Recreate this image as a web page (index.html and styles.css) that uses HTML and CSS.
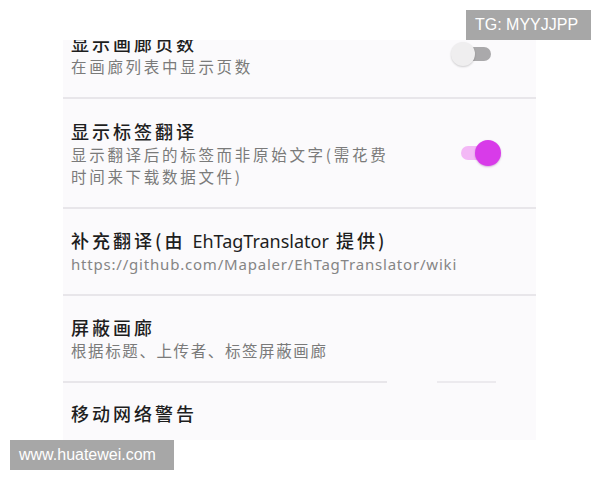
FILE: index.html
```html
<!DOCTYPE html>
<html lang="zh-CN">
<head>
<meta charset="UTF-8" />
<meta name="viewport" content="width=device-width, initial-scale=1" />
<title>设置</title>
<link rel="stylesheet" href="styles.css">
</head>
<body>

<div class="panel">
  <ul class="prefs">
    <li class="pref pref-first">
      <div class="pref-text">
        <div class="pref-title">显示画廊页数</div>
        <div class="pref-summary">在画廊列表中显示页数</div>
      </div>
      <span class="switch"><span class="track"></span><span class="thumb"></span></span>
    </li>
    <li class="pref">
      <div class="pref-text narrow">
        <div class="pref-title">显示标签翻译</div>
        <div class="pref-summary">显示翻译后的标签而非原始文字(需花费时间来下载数据文件)</div>
      </div>
      <span class="switch on"><span class="track"></span><span class="thumb"></span></span>
    </li>
    <li class="pref">
      <div class="pref-text">
        <div class="pref-title">补充翻译(由 <span class="latin">EhTagTranslator</span> 提供)</div>
        <div class="pref-summary url">https://github.com/Mapaler/EhTagTranslator/wiki</div>
      </div>
    </li>
    <li class="pref pref-split">
      <div class="pref-text">
        <div class="pref-title">屏蔽画廊</div>
        <div class="pref-summary tight">根据标题、上传者、标签屏蔽画廊</div>
      </div>
    </li>
    <li class="pref pref-last">
      <div class="pref-text">
        <div class="pref-title">移动网络警告</div>
      </div>
    </li>
  </ul>
</div>

<div class="mark mark-top">TG: MYYJJPP</div>
<div class="mark mark-bottom">www.huatewei.com</div>

</body>
</html>
```

FILE: styles.css
```css
body {
  margin: 0;
  background: #fff;
  font-family: "Noto Sans", "Noto Sans CJK SC", sans-serif;
  color: #1e1e1e;
}
.panel {
  margin: 40px 0 0 63px;
  width: 473px;
  height: 400px;
  overflow: hidden;
  background: #fbfafc;
}
.prefs {
  list-style: none;
  margin: -28px 0 0;
  padding: 0;
}
.pref {
  display: flex;
  align-items: center;
  padding: 18px 35px 19px 8px;
  border-bottom: 2px solid #e8e6ea;
  height: 48px;
}
.pref:nth-child(2) {
  height: 71px;
}
.pref-split {
  position: relative;
  border-bottom: none;
  padding-bottom: 21px;
}
.pref-split::after {
  content: "";
  position: absolute;
  left: 0;
  bottom: 0;
  width: 433px;
  height: 2px;
  background: linear-gradient(to right, #e8e6ea 324px, transparent 324px, transparent 374px, #eceaee 374px);
}
.pref-last {
  border-bottom: none;
  align-items: flex-start;
}
.pref-text {
  flex: 1;
}
.pref-text.narrow {
  flex: none;
  width: 330px;
  margin-right: auto;
}
.pref-title {
  font-family: "Noto Sans CJK SC", sans-serif;
  font-size: 18px;
  font-weight: 500;
  line-height: 24px;
  letter-spacing: 3px;
}
.latin {
  font-family: "Noto Sans", sans-serif;
  font-weight: 400;
  letter-spacing: 0;
}
.pref-summary {
  font-family: "Noto Sans CJK SC", sans-serif;
  font-size: 15.5px;
  line-height: 22px;
  letter-spacing: 2.7px;
  color: #7a7a7a;
}
.pref-summary.tight {
  letter-spacing: 1.6px;
}
.pref-summary.url {
  font-family: "Noto Sans", sans-serif;
  font-size: 15px;
  letter-spacing: 0.8px;
  color: #858585;
}
.switch {
  position: relative;
  width: 50px;
  height: 26px;
  flex: none;
}
.track {
  position: absolute;
  left: 8px;
  top: 6px;
  width: 32px;
  height: 14px;
  border-radius: 7px;
  background: #aaa9ab;
}
.thumb {
  position: absolute;
  left: 0;
  top: 1px;
  width: 24px;
  height: 24px;
  border-radius: 50%;
  background: #efeeef;
  box-shadow: 0 1px 2px rgba(0, 0, 0, 0.18);
}
.switch.on .track {
  left: 10px;
  width: 34px;
  background: #f3b8f6;
}
.switch.on .thumb {
  left: 24px;
  top: 0;
  width: 26px;
  height: 26px;
  background: #d83be9;
  box-shadow: 0 1px 2px rgba(120, 0, 140, 0.3);
}
.mark {
  position: absolute;
  background: #a7a7a7;
  color: #fff;
  font-family: "Liberation Sans", Arial, sans-serif;
  font-size: 16px;
  line-height: 30px;
  padding: 0 9px;
}
.mark-top {
  top: 10px;
  left: 466px;
  width: 107px;
}
.mark-bottom {
  top: 440px;
  left: 10px;
  width: 146px;
}
```
